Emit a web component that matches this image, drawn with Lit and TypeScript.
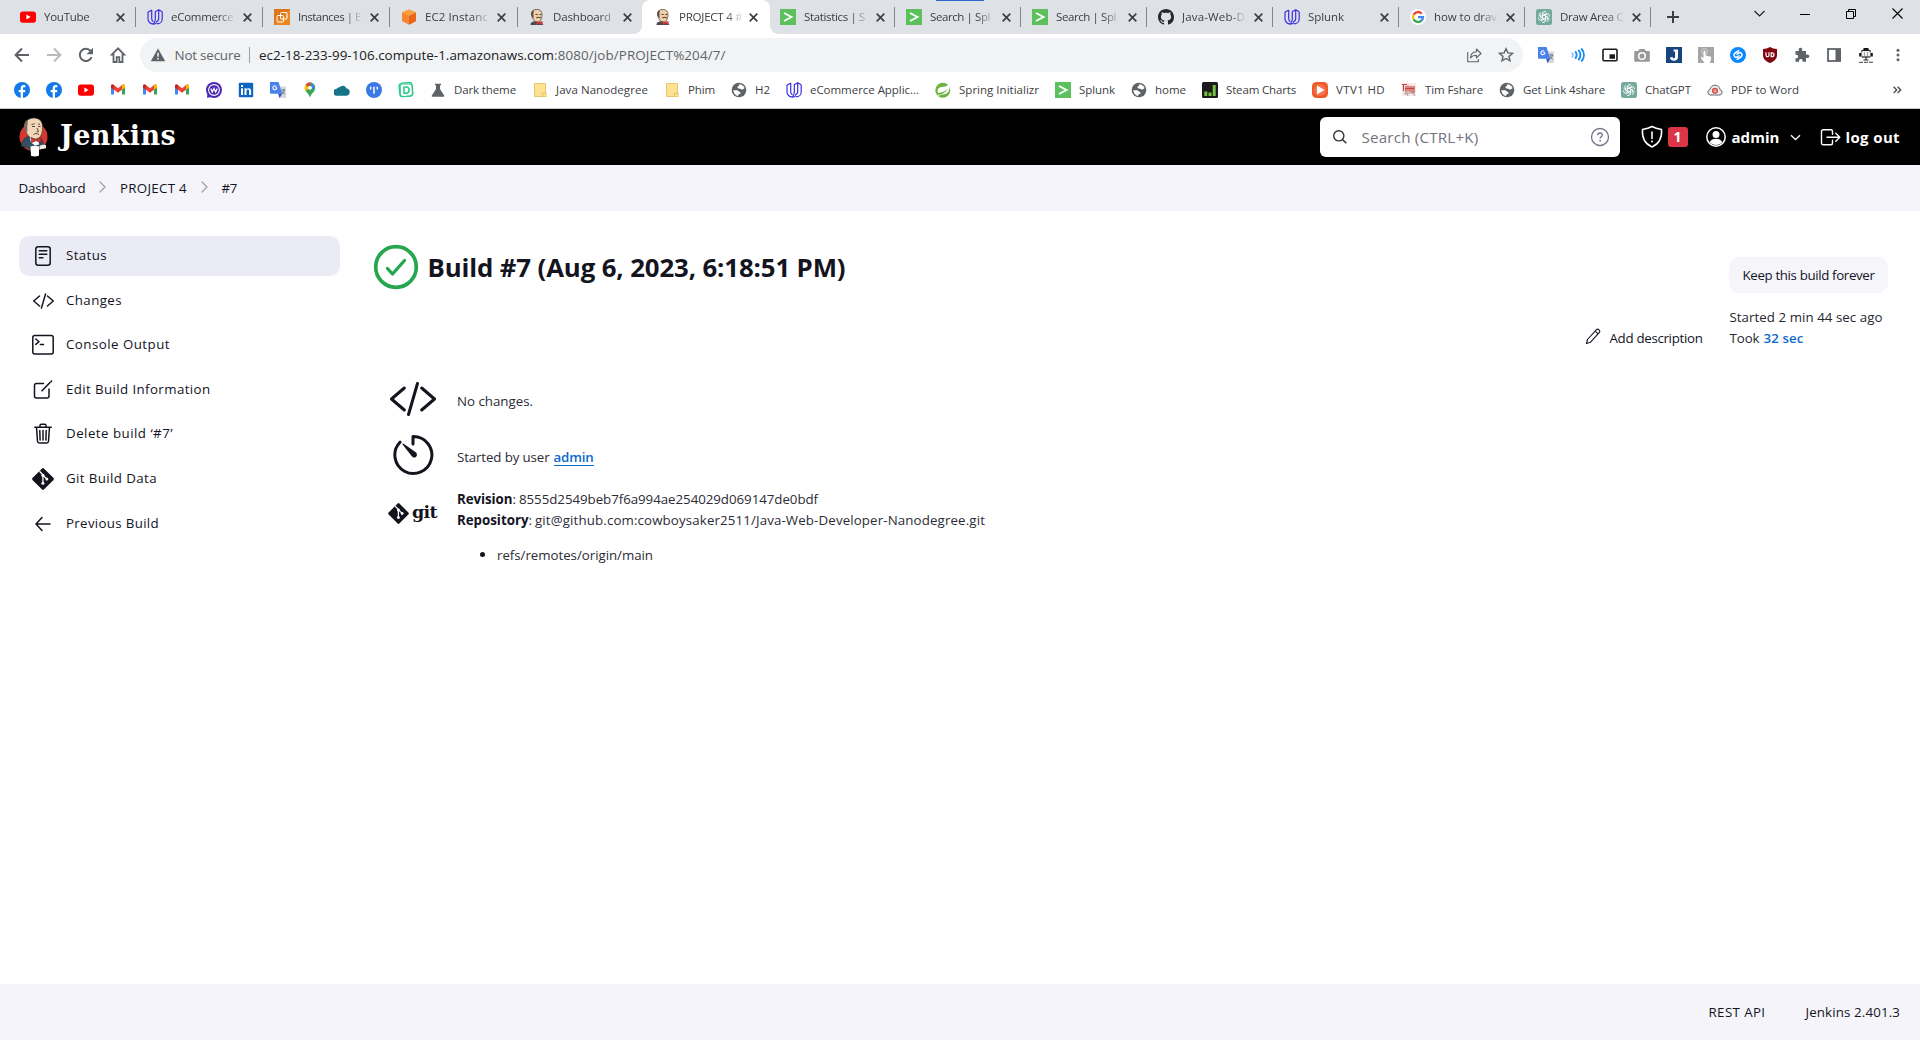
import { LitElement, html, css, svg, nothing } from "lit";
import { customElement, property, query } from "lit/decorators.js";

/* Text that is tracked so that it fills a given advance width. */
@customElement("fit-text")
class FitText extends LitElement {
  static styles = css`
    :host { display: inline-block; white-space: pre; }
    .run { display: inline-block; white-space: pre; }
  `;
  @property({ type: Number }) w = 0;
  @property() text = "";
  @query(".run") run!: HTMLElement;
  updated() {
    const el = this.run;
    el.style.letterSpacing = "0px";
    const natural = el.getBoundingClientRect().width;
    el.style.letterSpacing = (this.w - natural) / this.text.length + "px";
    this.style.width = this.w + "px";
  }
  render() {
    return html`<span class="run">${this.text}</span>`;
  }
}
const t = (text: string, w: number) => html`<fit-text .text=${text} .w=${w}></fit-text>`;

const icon = (size: number, body: unknown, box = "0 0 16 16", h = size) =>
  html`<svg width=${size} height=${h} viewBox=${box} fill="none">${body}</svg>`;

const youtube = () => icon(16, svg`<rect x="0" y="2.4" width="16" height="11.4" rx="2.8" fill="#f00"/><path d="M6.4 5.6v5l4.2-2.5z" fill="#fff"/>`);
const udacity = () => icon(16, svg`<path d="M4.700 1 1 3.300v6.400c0 3 2.300 5.400 5.300 5.400 1.600 0 2.900-.6 3.700-1.400M4.700 1v8.800c0 1.500.7 2.400 1.700 2.800M15.200 2.800 11.700.8v9c0 1.500-.9 2.600-2.500 3M11.700.8 8.300 2.800v7.500c0 2.300-1 3.800-2.300 4.700M15.200 2.800V9.700c0 2.900-2.200 5.200-5.200 5.200" stroke="#3a2fe0" stroke-width="1.200" stroke-linejoin="round"/>`);
const ec2 = () => icon(16, svg`<rect width="16" height="16" fill="#dd7519"/><path d="M0 16 16 0v16z" fill="#e98823"/><rect x="3" y="6.500" width="6.500" height="6.500" rx="1" stroke="#fff"/><rect x="6.500" y="3.500" width="6.500" height="6.500" rx="1" stroke="#fff"/>`);
const cube = () => icon(16, svg`<path d="M8 .5 15 3.500v8.500L8 15.800 1 12V3.500z" fill="#f58534"/><path d="M8 .5 15 3.500 8 7 1 3.500z" fill="#f9a13c"/><path d="M8 7 15 3.500v8.500L8 15.800z" fill="#e8661b"/>`);
const butler = () => icon(16, svg`<path d="M1.500 16c0-2 1-3.200 4-3.700L12 12.800l2.500 3.200z" fill="#4a4a50"/><path d="M2.500 5C2.500 2 4.500.4 8 .4c3.300 0 5 2 5 5.300 0 4-1.600 7.300-4.200 7.300C5 13 3.400 10 2.500 5z" fill="#efcfa9" stroke="#4a3a33" stroke-width=".7"/><path d="M2.400 7c-.6-3 .2-5.200 2.200-6 .2 2-.2 3-.2 5.600l.3 3z" fill="#5f4a40"/><path d="M6.500 5.500h2.200M10.300 5.500h1.900M7.300 9c1.500-1 3-1 4.500 0" stroke="#5a4238" stroke-width="1.100"/><path d="m7.500 12 2.700 1.300 3.300-1.300v3.700l-3.300-1.200-2.700 1.200z" fill="#d33833"/>`);
const splunk = () => icon(16, svg`<rect width="16" height="16" fill="#5cc05c"/><path d="m4 4 7.500 4L4 12" stroke="#fff" stroke-width="1.900"/>`);
const github = () => icon(16, svg`<path fill="#24292f" d="M8 0C3.580 0 0 3.580 0 8c0 3.540 2.290 6.530 5.470 7.590.4.070.55-.17.55-.38 0-.19-.01-.82-.01-1.490-2.010.37-2.530-.49-2.690-.94-.09-.23-.48-.94-.82-1.130-.28-.15-.68-.52-.01-.53.63-.01 1.080.58 1.230.82.72 1.210 1.870.87 2.330.66.070-.52.28-.87.51-1.070-1.780-.2-3.640-.89-3.640-3.950 0-.87.31-1.590.82-2.150-.08-.2-.36-1.020.08-2.120 0 0 .67-.21 2.200.82.64-.18 1.320-.27 2-.27s1.360.09 2 .27c1.530-1.040 2.200-.82 2.200-.82.44 1.100.16 1.920.08 2.120.51.56.82 1.270.82 2.150 0 3.070-1.870 3.750-3.650 3.950.29.25.54.73.54 1.480 0 1.070-.01 1.930-.01 2.200 0 .21.15.46.55.38A8.010 8.010 0 0 0 16 8c0-4.420-3.580-8-8-8z"/>`);
const google = () => icon(16, svg`<circle cx="8" cy="8" r="8" fill="#fff"/><g stroke-width="2.300"><path d="M11.700 4.600A5 5 0 0 0 3.600 5.700" stroke="#ea4335"/><path d="M3.600 5.700a5 5 0 0 0 0 4.700" stroke="#fbbc05"/><path d="M3.600 10.400a5 5 0 0 0 7.900 1.200" stroke="#34a853"/><path d="M8 8.200h5a5 5 0 0 1-1.600 3.500" stroke="#4285f4"/></g>`);
const chatgpt = () => icon(16, svg`<rect width="16" height="16" rx="2.500" fill="#74aa9c"/><g stroke="#fff" stroke-width=".8">${[0, 60, 120, 180, 240, 300].map(a => svg`<path transform="rotate(${a} 8 8)" d="M6.300 9V4.600a2.300 2.300 0 0 1 4-1.400M6.300 7l3.500-2 2 1.200"/>`)}</g>`);
const facebook = () => icon(16, svg`<circle cx="8" cy="8" r="8" fill="#1479ea"/><path fill="#fff" d="M9 16v-5.800h2l.4-2.300H9V6.500c0-.8.4-1.200 1.200-1.200h1.200V3.200c-2.900-.6-4.700.3-4.700 2.900v1.800h-2v2.300h2V16z"/>`);
const gmail = () => icon(16, svg`<path d="M1 3.600v9h3V7.300z" fill="#4285f4"/><path d="M15 3.600v9h-3V7.300z" fill="#34a853"/><path d="M1 5.500V4c0-1.700 1.600-2 2.600-1.200L8 6.200l4.400-3.400C13.400 2 15 2.300 15 4v1.500L8 10.800z" fill="#ea4335"/><path d="M12 4v3.800l3-2.300V4c0-1.700-1.700-2-2.700-1.100z" fill="#fbbc04"/><path d="M4 4v3.800L1 5.500V4c0-1.700 1.700-2 2.700-1.100z" fill="#c5221f"/>`);
const workplace = () => icon(16, svg`<circle cx="8" cy="8" r="8" fill="#4a26b5"/><path d="M1 15.800 1.500 11l4 4z" fill="#4a26b5"/><circle cx="8" cy="8" r="5.400" stroke="#fff" stroke-width="1.100"/><path d="m4.800 6.500 1.500 3.500L8 6.500l1.700 3.500 1.500-3.500" stroke="#fff" stroke-width="1.300"/>`);
const linkedin = () => icon(16, svg`<rect x=".8" y=".8" width="14.400" height="14.400" rx="1" fill="#0a66c2"/><path d="M3 6.300h2V13H3zM3 3h2v2H3zM6.500 6.300h2V13h-2zM8.500 8.300c.6-1.100 2.600-1 2.600.8V13h2V8.700c0-3-3.400-3.200-4.600-1.400z" fill="#fff"/>`);
const translate = () => icon(16, svg`<path d="M6 4.500h10V16H9z" fill="#d5d8dc"/><path d="M0 0h8.500l3.800 11.800H1a1 1 0 0 1-1-1z" fill="#4a82ec"/><path d="m8.300 11.800 4 0L9.500 16z" fill="#2e59c0"/><path d="M7 5.700H5.200M6.300 4.300a2 2 0 1 0 .6 1.500" stroke="#fff" stroke-width="1.100"/><path d="M11.200 8h4M13.200 7v1M14.500 8c-.4 2-1.500 3.200-2.800 4M12 9.200c.6 1.300 1.500 2.200 2.800 2.900" stroke="#5f6f86" stroke-width=".9"/>`);
const maps = () => icon(16, svg`<path d="M8 .6c3 0 5.200 2.300 5.200 5.200 0 4-3.900 5.200-5.200 9.700C6.700 11 2.800 9.800 2.800 5.800 2.800 3 5 .6 8 .6z" fill="#34a853"/><path d="M4 2.500 8 6 3.600 9C2.400 6.700 2.500 4.500 4 2.500z" fill="#fbbc04"/><path d="M4 2.500C5.600.4 8 .2 9.700 1L6 5z" fill="#ea4335"/><path d="M9.700 1c1.800.7 3 2 3.400 3.800L9.500 8z" fill="#4285f4"/><circle cx="8" cy="5.800" r="1.900" fill="#fff"/>`);
const cloud = () => icon(16, svg`<path d="M3.200 13.700a3.500 3.500 0 0 1-.5-7 2.800 2.800 0 0 1 2.800-1.500A4 4 0 0 1 12.400 6.200 3.800 3.800 0 0 1 12.600 13.700z" fill="#177387"/>`);
const bars = () => icon(16, svg`<circle cx="8" cy="8" r="8" fill="#3b78e7"/><path d="M4.700 4.800v2.700M8 4.800v7M11.300 4.800v2.700" stroke="#fff" stroke-width="1.500"/>`);
const dmark = () => icon(16, svg`<rect x="1.500" y=".8" width="13" height="13.500" rx="3" stroke="#2fc98a" stroke-width="1.400" transform="rotate(-5 8 8)"/><rect x="2.300" y="2" width="12" height="12.500" rx="2.500" stroke="#2fc98a"/><path d="M6 5h2.200c2 0 2.900 1.200 2.900 3s-1 3.200-3 3.200H6z" stroke="#2fc98a" stroke-width="1.600"/>`);
const flask = () => icon(16, svg`<path d="M5 1.800h6v1.400H10V7l4.200 6.500c.3.700 0 1.300-.8 1.300H2.600c-.8 0-1.100-.6-.8-1.300L6 7V3.200H5z" fill="#5f6368"/>`);
const folder = () => icon(16, svg`<path d="M2.500 1.500h11v9.500h.6v3.500H2.500z" fill="#fde293" stroke="#e3be55" stroke-width=".8"/><path d="M10.500 14.500v-3.200h3.600" stroke="#e3be55" stroke-width=".8"/>`);
const globe = () => icon(16, svg`<circle cx="8" cy="8" r="7.300" fill="#5f6368"/><path d="M2.300 8.300 5.500 8.300c2.300 0 2.300 2 4 2 .5 1.600-1 1.500-1.700 1.900-.6.400-.5 1.300-1 1.700C4.300 13.300 2.600 11.300 2.300 8.300zM8.300 2.200c2.500.2 4.500 1.600 5.300 3.800-1.300 1.500-2 1.700-3.300 1.200-1.600-.6-3.600-.4-3.800-1.700-.1-1.500 1.600-1 1.800-3.300z" fill="#fff"/>`);
const spring = () => icon(16, svg`<circle cx="7.800" cy="8.300" r="7.500" fill="#6db33f"/><path d="M13.700 2c1.400 3.300 1 7.300-2 9.300-2 1.400-5 1.500-8 1.200C8 12.300 11.300 10 12.700 6.800 10.500 9.500 7 10.800 3.200 11 1.500 7.500 3.500 5.400 6.800 5 10 4.600 12.500 4.300 13.700 2z" fill="#fff"/><circle cx="3.800" cy="13.300" r=".8" fill="#fff"/>`);
const steam = () => icon(16, svg`<rect width="16" height="16" rx="1.500" fill="#1b1b1b"/><path d="M2.300 9.500h3V14h-3zM6.500 10.500h3V14h-3zM10.700 3h3v11h-3z" fill="#76c043"/>`);
const vtv = () => icon(16, svg`<rect width="16" height="16" rx="4.500" fill="#f1592a"/><circle cx="8" cy="8" r="6" fill="#f9a58a" opacity=".35"/><path d="M5 3.500v9l7.500-4.500z" fill="#fff"/>`);
const tim = () => icon(16, svg`<rect x="1" y="1" width="14" height="13" fill="#f8e9e6"/><path d="M1 2.500h5M2.500 3v6M5 4v6M7 3.500v6M9 4v6M11 4v7M13 4v7M4 6.500h9" stroke="#c8403c" stroke-width="1.200"/><path d="M3 11h9M4 13l2-2 1 3M12 10l1.500 4" stroke="#8f8a90" stroke-width=".8"/>`);
const pdf = () => icon(16, svg`<path d="M3 13a2.700 2.700 0 0 1-.2-5.200C3.500 4.500 5.700 3.200 8 3.200s4.600 1.300 5.200 4.600A2.700 2.700 0 0 1 13 13z" fill="#eee" stroke="#555" stroke-width=".9"/><circle cx="8" cy="8.800" r="2.300" stroke="#d8443c" stroke-width="1.500"/><circle cx="8" cy="8.800" r=".7" fill="#a33"/>`);

/* Toolbar glyphs */
const back = () => icon(16, svg`<path d="M15 8H2M8 1.500 1.600 8 8 14.500" stroke="#5f6368" stroke-width="2"/>`);
const forward = () => icon(16, svg`<path d="M1 8h13M8 1.500 14.400 8 8 14.500" stroke="#babcbe" stroke-width="2"/>`);
const reload = () => icon(16, svg`<path d="M13.600 10.200A6.100 6.100 0 1 1 12.600 4" stroke="#5f6368" stroke-width="2"/><path d="M15 .8v6.400H8.600z" fill="#5f6368"/>`);
const home = () => icon(18, svg`<path d="M9 2.300 2.800 8.700H4.500V16h3.200v-4.800h2.600V16h3.200V8.700h1.700z" stroke="#5f6368" stroke-width="1.800"/>`, "0 0 18 18");
const share = () => icon(18, svg`<path d="M2.700 6v9.700h10.600v-2.700M5.500 12c.2-4 2.600-6 5.900-6.200V3l4.600 4.500-4.600 4.300V9.300c-2.600 0-4.500.8-5.900 2.700z" stroke="#5f6368" stroke-width="1.100" stroke-linejoin="round"/>`, "0 0 18 18");
const star = () => icon(16, svg`<path d="m8 1.700 1.900 4.200 4.600.4-3.500 3.100 1 4.500L8 11.500l-4 2.400 1-4.500-3.500-3.100 4.600-.4z" stroke="#5f6368" stroke-width="1.400"/>`);
const waves = () => icon(16, svg`<path d="M2 5.500c1.200 1.600 1.200 3.400 0 5" stroke="#8cc8fa" stroke-width="1.800"/><path d="M5.200 4.200c1.800 2.400 1.800 5.200 0 7.600M8.300 2.800c2.700 3.200 2.700 7.200 0 10.400M11.300 1.500c3.500 4 3.500 9 0 13" stroke="#1a8cf0" stroke-width="1.900"/>`);
const pip = () => icon(16, svg`<rect x="1" y="2.300" width="14" height="11.400" rx="1" stroke="#1b1b1b" stroke-width="1.600"/><path d="M7.500 7.300H13v4.500H7.500z" fill="#1b1b1b"/>`);
const camera = () => icon(16, svg`<path d="M1 4h3l1.500-2h5L12 4h3a.8.8 0 0 1 .8.800V14a.8.8 0 0 1-.8.800H1A.8.8 0 0 1 .2 14V4.800A.8.8 0 0 1 1 4z" fill="#999"/><circle cx="8" cy="9" r="3.300" stroke="#fff" stroke-width="1.500"/>`);
const jsq = () => icon(16, svg`<rect width="16" height="16" fill="#17457f"/><path d="M7.500 2.500H12V10c0 2.400-1.500 3.700-4 3.700-2 0-3.700-1-4.200-3l2.600-1c.3 1 .8 1.500 1.500 1.500.9 0 1.200-.6 1.200-1.500V4.600H7.500z" fill="#fff"/>`);
const touch = () => icon(16, svg`<rect width="16" height="16" fill="#a5a5a5"/><circle cx="6.500" cy="4.500" r="3" stroke="#d4d4d4"/><path d="M5.500 4.500c0-1.300 2-1.300 2 0v4l4.500 1c1.200.3 1.300 1 1.100 2L12 16H6.500L3 11c-.3-1 .8-1.500 1.500-.8l1 1z" fill="#fff"/>`);
const shazam = () => icon(16, svg`<circle cx="8" cy="8" r="8" fill="#0a88ff"/><path d="M8.700 3.700 5.200 6C3.700 7 3.700 8.800 4.700 9.700c1 .9 2.300.7 3.200 0l1-.9M7.300 12.300 10.800 10c1.500-1 1.500-2.800.5-3.700-1-.9-2.300-.7-3.200 0l-1 .9" stroke="#fff" stroke-width="1.500" stroke-linecap="round"/>`);
const ublock = () => icon(16, svg`<path d="M8 0c2 1.300 4.500 1.900 7 2v6c0 4-3 6.500-7 8-4-1.500-7-4-7-8V2c2.500-.1 5-.7 7-2z" fill="#800610"/><path d="M4 5.200v3c0 2 3 2 3 0v-3M9.200 5.800v3.800h.8c2.600 0 2.600-3.800 0-3.800z" stroke="#fff" stroke-width="1.200"/>`);
const puzzle = () => icon(16, svg`<path d="M1.500 4h3.600c-1-1.800-.1-3.300 1.400-3.300S8.800 2.200 8 4h4v3.700c1.800-.8 3.300 0 3.300 1.500S13.800 11.600 12 10.700V14.800H8.500c.6-1.600-.4-2.700-1.700-2.700s-2.200 1.100-1.700 2.700H1.500v-3.600c1.600.5 2.600-.5 2.600-1.800S3.100 7.300 1.500 7.800z" fill="#5f6368"/>`);
const panel = () => icon(16, svg`<rect x="2" y="2" width="12" height="12" stroke="#5f6368" stroke-width="1.800"/><path d="M9.500 2H15v12H9.500z" fill="#5f6368"/>`);
const profile = () => icon(16, svg`<path d="M3.500 3.500h9v6.500h-9z" fill="#eee" stroke="#777" stroke-width=".7"/><path d="M5.500 1h5v3h-5zM1.200 6h2v3.500h-2zM14.800 6h-2v3.500h2z" fill="#111"/><path d="M3.500 4.300C5 2.500 11 2.500 12.500 4.300M4 10h8M8 10v3M5.500 13h5" stroke="#222" stroke-width="1.200"/><path d="M6.500 5v4M9.500 5v4" stroke="#999" stroke-width=".8"/><path d="M1 15.300h14" stroke="#444" stroke-dasharray="4 1"/>`);
const dots = () => icon(16, svg`<circle cx="8" cy="3.300" r="1.500" fill="#5f6368"/><circle cx="8" cy="8" r="1.500" fill="#5f6368"/><circle cx="8" cy="12.700" r="1.500" fill="#5f6368"/>`);

/* Jenkins glyphs */
const gitDiamond = (size: number) => icon(size, svg`<rect x="2.900" y="2.900" width="16.200" height="16.200" rx="1.600" transform="rotate(45 11 11)" fill="#14141f"/><path d="m7.500 3.300 3.400 3.500V15.500M11 7.200l3.800 3.700" stroke="#fff" stroke-width="1.300"/><circle cx="10.900" cy="7.300" r="1.500" fill="#fff"/><circle cx="10.900" cy="15.300" r="1.500" fill="#fff"/><circle cx="14.800" cy="11" r="1.500" fill="#fff"/>`, "0 0 22 22");
const code = (w: number, h: number, sw: number) => icon(w, svg`<g stroke="#14141f" stroke-width=${sw} stroke-linecap="round" stroke-linejoin="round"><path d="M14.300 6 1.500 17l12.800 11M31.700 6 44.500 17 31.700 28M27.500 1.500l-9 31"/></g>`, "0 0 46 34", h);
const S = (b: unknown) => icon(24, svg`<g stroke="#14141f" stroke-width="1.500" stroke-linecap="round" stroke-linejoin="round">${b}</g>`, "0 0 24 24");
const chevron = (c: string) => icon(10, svg`<path d="m2 1 5 5-5 5" stroke=${c} stroke-width="1.300" stroke-linecap="round" stroke-linejoin="round"/>`, "0 0 10 12", 12);

const TABS: [() => unknown, string, number, number, string?][] = [
  [youtube, "YouTube", 45.5, 127],
  [udacity, "eCommerce", 62.5, 127],
  [ec2, "Instances | E", 63, 127],
  [cube, "EC2 Instanc", 63, 128],
  [butler, "Dashboard", 58, 126, "plain"],
  [butler, "PROJECT 4 #", 63.5, 125, "active"],
  [splunk, "Statistics | S", 61, 126],
  [splunk, "Search | Spl", 60, 126],
  [splunk, "Search | Spl", 60, 126],
  [github, "Java-Web-D", 63, 126],
  [udacity, "Splunk", 36, 126],
  [google, "how to drav", 63, 126],
  [chatgpt, "Draw Area C", 63.5, 126],
];
const SMALL = [facebook, facebook, youtube, gmail, gmail, gmail, workplace, linkedin, translate, maps, cloud, bars, dmark];
const MARKS: [() => unknown, string, number][] = [
  [flask, "Dark theme", 62], [folder, "Java Nanodegree", 92], [folder, "Phim", 27], [globe, "H2", 15],
  [udacity, "eCommerce Applic...", 109], [spring, "Spring Initializr", 80], [splunk, "Splunk", 36],
  [globe, "home", 31], [steam, "Steam Charts", 70], [vtv, "VTV1 HD", 49], [tim, "Tim Fshare", 58],
  [globe, "Get Link 4share", 82], [chatgpt, "ChatGPT", 46], [pdf, "PDF to Word", 68],
];
const EXT = [translate, waves, pip, camera, jsq, touch, shazam, ublock, puzzle, panel, profile, dots];

@customElement("browser-chrome")
class BrowserChrome extends LitElement {
  static styles = css`
    :host { display: block; height: 109px; background: #fff; color: #3c4043; font: 11.5px/16px "Open Sans", "Noto Sans", sans-serif; }
    svg { display: block; flex: none; }
    .strip { position: relative; display: flex; height: 34px; background: #dee1e6; padding-left: 9px; align-items: stretch; }
    .tab { position: relative; display: flex; align-items: center; box-sizing: border-box; flex: none; padding: 0 11px 0 11px; }
    .tab::after { content: ""; position: absolute; right: 0; top: 7px; height: 20px; width: 1px; background: #80868b; }
    .tab.plain::after, .tab.active::after { display: none; }
    .title { width: 65px; margin-left: 8px; overflow: hidden; flex: none; white-space: nowrap; -webkit-mask-image: linear-gradient(90deg, #000 72%, transparent 100%); mask-image: linear-gradient(90deg, #000 72%, transparent 100%); }
    .tab .x { margin-left: 6.500px; }
    .plain .x, .active .x { margin-left: 5px; }
    .back { position: absolute; left: -2px; top: 0; width: 128px; height: 34px; background: #fff; border-radius: 8px 8px 0 0; }
    .back::before, .back::after { content: ""; position: absolute; bottom: 0; width: 8px; height: 8px; }
    .back::before { left: -8px; background: radial-gradient(circle at 0 0, transparent 7.500px, #fff 8px); }
    .back::after { right: -8px; background: radial-gradient(circle at 100% 0, transparent 7.500px, #fff 8px); }
    .tab > svg, .tab > .title { position: relative; }
    .load { position: absolute; left: 936px; top: 0; width: 48px; height: 1px; background: #2a66c8; }
    .plus { align-self: center; margin-left: 16px; }
    .win { display: flex; margin-left: auto; padding: 0 0 7px; align-items: center; }
    .win span { width: 46px; display: flex; justify-content: center; }
    .bar { display: flex; height: 42px; align-items: center; }
    .nav { display: flex; width: 140px; flex: none; }
    .nav span { width: 32px; display: flex; justify-content: center; align-items: center; }
    .nav span:first-child { margin-left: 6px; }
    .pill { display: flex; align-items: center; width: 1383px; height: 34px; border-radius: 17px; background: #f1f3f4; box-sizing: border-box; padding: 0 9px 0 10px; font-size: 13.400px; color: #5f6368; }
    .warn { margin-right: 8.500px; }
    .rule { width: 1px; height: 16px; background: #9aa0a6; margin: 0 9.500px 0 8px; }
    .host { color: #202124; }
    .end { margin-left: auto; display: flex; gap: 15px; align-items: center; }
    .ext { display: flex; padding-left: 7px; }
    .ext span { width: 32px; display: flex; justify-content: center; }
    .marks { display: flex; align-items: center; height: 28px; padding: 0 18px 0 14px; gap: 16px; }
    .mark { display: flex; align-items: center; gap: 8px; flex: none; }
    .more { margin-left: auto; }
    .line { height: 1px; background: #c8cacd; margin-top: 4px; }
  `;
  render() {
    return html`
      <div class="strip">
        ${TABS.map(([ic, s, w, width, kind]) => html`
          <div class="tab ${kind ?? ""}" style="width:${width}px">
            ${kind === "active" ? html`<div class="back"></div>` : nothing}
            ${ic()}<div class="title">${t(s, w)}</div>
            <svg class="x" width="9" height="9" viewBox="0 0 9 9"><path d="m.7.700 7.600 7.600M8.300.700.700 8.300" stroke="#3c4043" stroke-width="1.700"/></svg>
          </div>`)}
        <div class="load"></div>
        <div class="plus">${icon(12, svg`<path d="M6 0v12M0 6h12" stroke="#3c4043" stroke-width="2"/>`, "0 0 12 12")}</div>
        <div class="win">
          <span>${icon(11, svg`<path d="m.5 3 5 5 5-5" stroke="#222" stroke-width="1.200"/>`, "0 0 11 11")}</span>
          <span>${icon(10, svg`<path d="M0 5.500h10" stroke="#000"/>`, "0 0 10 10")}</span>
          <span>${icon(10, svg`<path d="M.5 2.500h7v7h-7zM2.500 2.500v-2h7v7h-2" stroke="#000"/>`, "0 0 10 10")}</span>
          <span>${icon(11, svg`<path d="m.5.500 10 10M10.500.500l-10 10" stroke="#000" stroke-width="1.100"/>`, "0 0 11 11")}</span>
        </div>
      </div>
      <div class="bar">
        <div class="nav"><span>${back()}</span><span>${forward()}</span><span>${reload()}</span><span>${home()}</span></div>
        <div class="pill">
          <span class="warn">${icon(16, svg`<path d="M8 1.500 15.200 14.300H.8z" fill="#5f6368"/><path d="M8 5.800v4M8 11v1.600" stroke="#f1f3f4" stroke-width="1.500"/>`)}</span>
          ${t("Not secure", 66)}<i class="rule"></i>
          <span class="host">${t("ec2-18-233-99-106.compute-1.amazonaws.com", 295)}</span>${t(":8080/job/PROJECT%204/7/", 171.5)}
          <span class="end">${share()}${star()}</span>
        </div>
        <div class="ext">${EXT.map(e => html`<span>${e()}</span>`)}</div>
      </div>
      <div class="marks">
        ${SMALL.map(e => e())}
        ${MARKS.map(([ic, s, w]) => html`<div class="mark">${ic()}${t(s, w)}</div>`)}
        <div class="more">${icon(9, svg`<path d="m.7.700 3 3.200-3 3.200M4.700.700l3 3.200-3 3.200" stroke="#4a4d51" stroke-width="1.400"/>`, "0 0 9 8", 8)}</div>
      </div>
      <div class="line"></div>`;
  }
}

const TASKS: [string, number, unknown][] = [
  ["Status", 41, S(svg`<rect x="4.800" y="2.800" width="14.400" height="18.400" rx="2.500"/><path d="M8.300 6.800h7.500M8.300 10.300h7.500M8.300 13.800h3.500"/>`)],
  ["Changes", 56, code(21, 16, 3.2)],
  ["Console Output", 104, S(svg`<rect x="1.800" y="2.500" width="20.400" height="18.400" rx="2"/><path d="m4.800 6 3.200 2.700-3.200 2.700M9.300 11.400h3.200"/>`)],
  ["Edit Build Information", 144.5, S(svg`<path d="M12.500 5.500H5.500a2 2 0 0 0-2 2V18a2 2 0 0 0 2 2H16a2 2 0 0 0 2-2v-7"/><path d="m11 12.700 8-8.200" stroke-width="1.600"/><path d="m20 3.600.5-.5"/>`)],
  ["Delete build ‘#7’", 107, S(svg`<path d="M3.800 5.300h16.400M5.500 5.300l1 14c.1 1 .8 1.700 1.800 1.700h7.400c1 0 1.700-.7 1.800-1.700l1-14M9 5V3.500c0-.8.500-1.300 1.300-1.300h3.400c.8 0 1.300.5 1.300 1.300V5M12 8.500v9.500M8.800 8.500l.3 9.500M15.200 8.500l-.3 9.500"/>`)],
  ["Git Build Data", 91, gitDiamond(22)],
  ["Previous Build", 93, S(svg`<path d="M11 5.500 5 12l6 6.500M5.300 12H19"/>`)],
];

@customElement("app-root")
class AppRoot extends LitElement {
  static styles = css`
    :host { display: flex; flex-direction: column; height: 1040px; overflow: hidden; background: #fff; color: #14141f; font: 13.300px/21px "Open Sans", "Noto Sans", sans-serif; }
    svg { display: block; flex: none; }
    .header { display: flex; align-items: center; height: 56px; background: #000; color: #fff; flex: none; padding: 0 20px 0 18px; box-sizing: border-box; }
    .brand { font: bold 27px/34px "DejaVu Serif", serif; margin: 0 auto 3px 11px; }
    .search { display: flex; align-items: center; width: 300px; height: 40px; border-radius: 6px; background: #fff; box-sizing: border-box; padding: 0 10px 0 12px; color: #73737d; font-size: 15.200px; }
    .search fit-text { margin: 0 auto 0 14px; }
    .shield { margin-left: 20px; }
    .badge { width: 20px; height: 20px; margin: 0 17px 0 4px; border-radius: 3px; background: #dc3545; font: bold 14px/20px "Open Sans", sans-serif; text-align: center; }
    .strong { font-weight: 700; font-size: 15px; }
    .who { margin: 0 10px 0 5px; }
    .out { margin: 0 5px 0 19px; }
    .crumbs { display: flex; align-items: center; height: 46px; flex: none; background: #f4f4fa; padding-left: 18.500px; box-sizing: border-box; padding-top: 1px; }
    .crumbs svg { margin: 0 12px 3px 12.500px; }
    .main { display: flex; flex: 1; padding: 25px 32px 0 19px; align-items: flex-start; }
    .side { width: 321px; display: flex; flex-direction: column; gap: 4.600px; flex: none; }
    .task { display: flex; height: 40px; border-radius: 10px; align-items: center; }
    .task.on { background: #ebebf5; }
    .task fit-text { margin-bottom: 1px; }
    .ico { width: 24px; margin: 0 11px 0 12px; display: flex; justify-content: center; }
    .content { flex: 1; padding-left: 33px; }
    .top { display: flex; height: 135px; align-items: flex-start; }
    .headline { display: flex; align-items: center; gap: 8.500px; flex: 1; padding-top: 8px; font: 700 25.800px/46px "Open Sans", sans-serif; }
    .desc { display: flex; align-items: center; gap: 9px; margin: 92px 26.500px 0 0; }
    .desc svg { margin-bottom: 4px; }
    .aside { width: 159px; padding-top: 21px; }
    .keep { height: 36px; border-radius: 10px; background: #f5f5fa; display: flex; align-items: center; justify-content: center; margin-bottom: 14px; }
    .link { color: #0b6acb; font-weight: 600; }
    .line { height: 21px; display: flex; gap: 4px; padding-left: .5px; color: #26262f; }
    .rows { padding-left: 15px; display: grid; grid-template-columns: 50px auto; column-gap: 19px; color: #2c2c36; }
    .pic { display: flex; align-items: center; justify-content: center; height: 56px; }
    .cell { display: flex; align-items: center; padding-top: 5px; gap: 4px; }
    .u { height: 18px; line-height: 18px; border-bottom: 1px solid #0b6acb; margin-top: -1px; }
    .u { display: flex; height: 17px; }
    .git { display: flex; align-items: center; gap: 3px; height: 60px; }
    .word { display: flex; font: bold 17.500px/24px "DejaVu Serif", serif; color: #14141f; padding-bottom: 2px; }
    .data { padding-top: 6px; }
    .data div { height: 21px; display: flex; }
    .data b { color: #14141f; }
    .data .ref { margin-top: 14px; align-items: center; }
    .dot { width: 5px; height: 5px; border-radius: 50%; background: #14141f; margin: 0 12px 2px 23px; }
    .footer { height: 56px; flex: none; background: #f4f4fa; display: flex; align-items: center; justify-content: flex-end; gap: 40px; padding: 0 20px 0 0; }
  `;
  render() {
    return html`
      <browser-chrome></browser-chrome>
      <div class="header">
        ${icon(31, svg`
          <circle cx="15.500" cy="20" r="14" fill="#d33833"/>
          <path d="M3 29c1-5 3-8 7-9.500l12 1.500c2 1 3 4 4 8l-6 3-1 2h-7l-1-3z" fill="#334f60" stroke="#1b2a33" stroke-width=".6"/>
          <path d="M11.500 19.500c2 3 7 4 9 1.500l.5 6.500-4 1-4-3z" fill="#fff"/>
          <path d="M7 11C6.500 5 10 1 16 1c5.500 0 8.500 3.500 8.500 9 0 6-1.500 11.500-6.500 12-6 .5-9.500-4-11-11z" fill="#f0d6b7" stroke="#38302c" stroke-width=".6"/>
          <path d="M6.800 13C5 8 6.500 4 10 2.500c-.5 3.500 0 4.500-.8 7.500l.3 4-1.500 1z" fill="#7e6a5e"/>
          <path d="M14 9.500h3M20 9.500h2.500M13.500 7.500l3-.7M20 7l2 .3M19 11l1.500 3.500-2 .5M15.500 17.500c1.500-1.200 4-1.200 5.500 0" stroke="#49392f" stroke-width=".9"/>
          <path d="m13.500 20.500 4.500 2.300 5-2.300v5.300l-5-2-4.500 2z" fill="#d33833" stroke="#5a1512" stroke-width=".5"/>
          <path d="M12.500 29.500c3-1.200 6-1 8.500 0v9c-2.500 1.200-5.500 1.300-8 .2z" fill="#fff"/>
          <path d="M21.500 29c2-1.200 4.500-1.500 6.500-.8v3l-6.500 1.300z" fill="#f3ece6"/>`, "0 0 31 41", 41)}
        <div class="brand">${t("Jenkins", 116)}</div>
        <div class="search">
          ${icon(16, svg`<circle cx="6.800" cy="6.800" r="5.100" stroke="#333" stroke-width="1.400"/><path d="m10.700 10.700 3.600 3.600" stroke="#333" stroke-width="1.600"/>`)}
          ${t("Search (CTRL+K)", 117)}
          ${icon(20, svg`<circle cx="10" cy="10" r="8.500" stroke="#73738c" stroke-width="1.300"/><path d="M7.700 8.200c0-1.300 1-2.200 2.300-2.200s2.300.9 2.300 2.100c0 1.700-2.200 1.700-2.200 3.400" stroke="#73738c" stroke-width="1.300"/><circle cx="10.100" cy="13.700" r=".9" fill="#73738c"/>`, "0 0 20 20")}
        </div>
        <div class="shield">${icon(24, svg`<path d="M12 1.500c-2.700 1.500-5.900 2.400-9.500 3C1.800 13 4.300 18.500 12 22c7.700-3.500 10.200-9 9.500-17.500-3.600-.6-6.800-1.500-9.500-3z" stroke="#fff" stroke-width="1.500" stroke-linejoin="round"/><path d="M12 7v6.500" stroke="#fff" stroke-width="1.600" stroke-linecap="round"/><circle cx="12" cy="16.500" r="1" fill="#fff"/>`, "0 0 24 24")}</div>
        <div class="badge">1</div>
        ${icon(22, svg`<circle cx="11" cy="11" r="9.200" stroke="#fff" stroke-width="1.500"/><circle cx="11" cy="8.500" r="3.500" fill="#fff"/><path d="M4.800 16.300c1-2.600 3.500-3.500 6.200-3.500s5.200.9 6.200 3.500C15.700 18.300 13.500 19 11 19s-4.700-.7-6.200-2.700z" fill="#fff"/>`, "0 0 22 22")}
        <span class="strong who">${t("admin", 48)}</span>
        ${icon(11, svg`<path d="m1 3.200 4.500 4.300L10 3.200" stroke="#fff" stroke-width="1.300"/>`, "0 0 11 11")}
        <span class="out">${icon(21, svg`<path d="M12.500 6.200V3.500a1.800 1.800 0 0 0-1.800-1.800H3.300a1.800 1.800 0 0 0-1.800 1.800v11.500a1.800 1.800 0 0 0 1.800 1.800h7.400a1.800 1.800 0 0 0 1.800-1.800v-2.700M7 9.300h12.500M15.800 5.300l4 4-4 4" stroke="#fff" stroke-width="1.400" stroke-linecap="round" stroke-linejoin="round"/>`, "0 0 21 18", 18)}</span>
        <span class="strong">${t("log out", 54.5)}</span>
      </div>
      <div class="crumbs">${t("Dashboard", 67)}${chevron("#a0a0b4")}${t("PROJECT 4", 67)}${chevron("#a0a0b4")}${t("#7", 15.5)}</div>
      <div class="main">
        <div class="side">
          ${TASKS.map(([s, w, ic], i) => html`<div class="task ${i ? "" : "on"}"><span class="ico">${ic}</span>${t(s, w)}</div>`)}
        </div>
        <div class="content">
          <div class="top">
            <div class="headline">
              ${icon(46, svg`<circle cx="23" cy="23" r="20.300" stroke="#26a64f" stroke-width="3.700"/><path d="m14.500 24.500 5 5.500L31.500 16.500" stroke="#26a64f" stroke-width="3.300" stroke-linecap="round" stroke-linejoin="round"/>`, "0 0 46 46")}
              ${t("Build #7 (Aug 6, 2023, 6:18:51 PM)", 418)}
            </div>
            <div class="desc">
              ${icon(16, svg`<path d="m1.500 15.500 1-4L11.500 1.600c1.400-1.300 4.200 1.100 2.900 2.800L5.300 14.300zM10.200 3.100l2.900 2.700" stroke="#14141f" stroke-width="1.100" stroke-linejoin="round"/>`, "0 0 16 17", 17)}
              ${t("Add description", 93)}
            </div>
            <div class="aside">
              <div class="keep">${t("Keep this build forever", 132)}</div>
              <div class="line">${t("Started 2 min 44 sec ago", 153)}</div>
              <div class="line">${t("Took", 30)}<span class="link">${t("32 sec", 40)}</span></div>
            </div>
          </div>
          <div class="rows">
            <div class="pic">${code(46, 34, 3)}</div>
            <div class="cell">${t("No changes.", 76)}</div>
            <div class="pic">${icon(42, svg`<path d="M21 10V2.500a18.500 18.500 0 1 1-13 5.700" stroke="#14141f" stroke-width="3" stroke-linecap="round" stroke-linejoin="round"/><path d="M10.800 10.800c-.7-.9.200-1.500.9-1.100l12 8.600c3.300 3-.8 7.500-3.900 4z" fill="#14141f"/>`, "0 0 42 42")}</div>
            <div class="cell">${t("Started by user", 92.5)}<span class="link u">${t("admin", 40)}</span></div>
            <div class="git">${gitDiamond(21)}<span class="word">${t("git", 25)}</span></div>
            <div class="data">
              <div><b>${t("Revision", 55.5)}</b>${t(": ", 6.5)}${t("8555d2549beb7f6a994ae254029d069147de0bdf", 299)}</div>
              <div><b>${t("Repository", 71.5)}</b>${t(": ", 6.5)}${t("git@github.com:cowboysaker2511/Java-Web-Developer-Nanodegree.git", 450)}</div>
              <div class="ref"><i class="dot"></i>${t("refs/remotes/origin/main", 156)}</div>
            </div>
          </div>
        </div>
      </div>
      <div class="footer">${t("REST API", 57)}${t("Jenkins 2.401.3", 94.5)}</div>`;
  }
}
